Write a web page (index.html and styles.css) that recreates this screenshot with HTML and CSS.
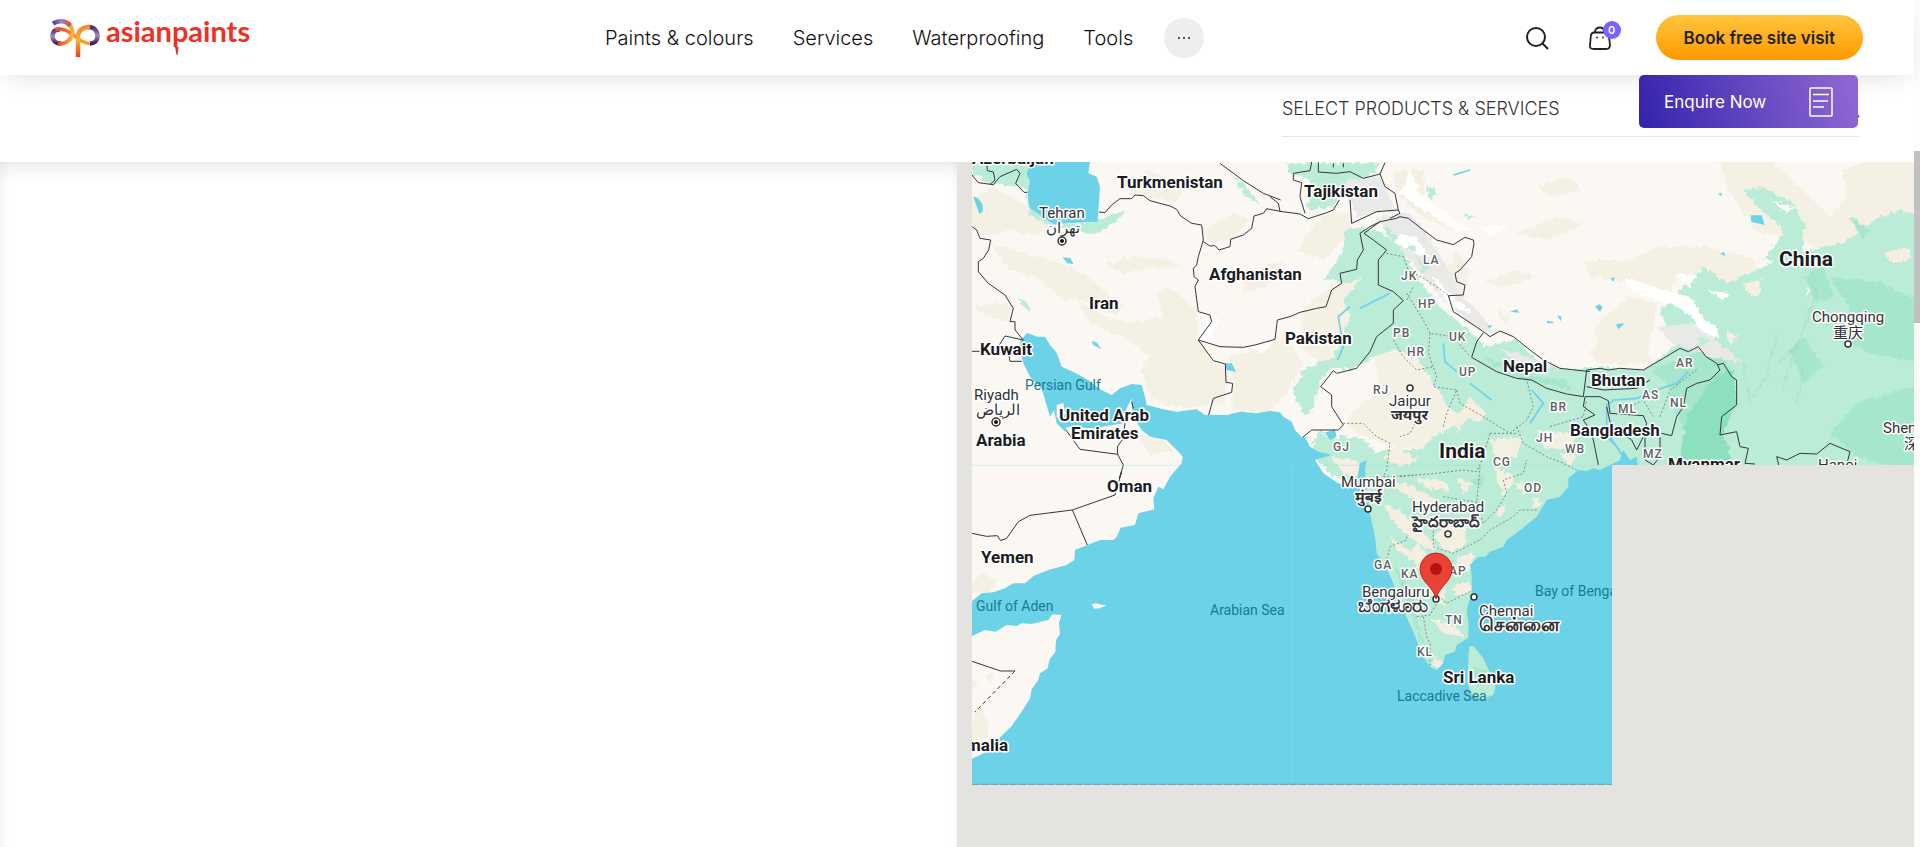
FILE: index.html
```html
<!DOCTYPE html>
<html lang="en">
<head>
<meta charset="utf-8">
<title>Asian Paints</title>
<link rel="stylesheet" href="styles.css">
</head>
<body>
<div class="page">
  <header class="header">
    <a class="logo" href="#" aria-label="asianpaints">
      <svg width="204" height="46" viewBox="49 14 204 46">
        <defs>
          <linearGradient id="lv" x1="0" y1="0" x2="0" y2="1"><stop offset="0" stop-color="#4b2a78"/><stop offset=".5" stop-color="#a386c6"/><stop offset="1" stop-color="#3f2160"/></linearGradient>
          <linearGradient id="lh" x1="0" y1="0" x2="1" y2="0"><stop offset="0" stop-color="#5a3a8c"/><stop offset=".5" stop-color="#9a80c4"/><stop offset="1" stop-color="#e8502c"/></linearGradient>
          <linearGradient id="lo" x1="0" y1="0" x2="0" y2="1"><stop offset="0" stop-color="#f58a2a"/><stop offset=".45" stop-color="#fbb034"/><stop offset="1" stop-color="#ee3a24"/></linearGradient>
          <linearGradient id="lr" x1="0" y1="0" x2="1" y2="0"><stop offset="0" stop-color="#ee4a28"/><stop offset="1" stop-color="#fbb034"/></linearGradient>
        </defs>
        <g fill="none" stroke-width="4.500">
          <path d="M61 42.500C55 42.500 52.500 39 52.500 35C52.500 31 55 28.500 60 28.500" stroke="url(#lv)"/>
          <path d="M55 28.500C64 26.500 69 31 74 34.500C79 39 84 43 91 42.500" stroke="url(#lr)" stroke-width="3.500"/>
          <path d="M58 42.500C66 44 72 38 72.500 32C72.500 28 71 25 68 22" stroke="url(#lr)" stroke-width="4"/>
          <path d="M53 22.500C59 19 66 19.500 70 24.500" stroke="url(#lh)"/>
          <path d="M88 26C94 26 97.500 30 97.500 35C97.500 40 94 42.500 90 42.500" stroke="url(#lv)"/>
          <path d="M78 56V36C78 29 83 26 90 26" stroke="url(#lo)"/>
        </g>
        <text class="logo-text" x="106" y="41">asianpaints</text>
        <path d="M175 46H178.500L177.500 54H176.500Z" fill="#ee3124"/>
      </svg>
    </a>
    <nav class="nav">
      <a href="#">Paints &amp; colours</a>
      <a href="#">Services</a>
      <a href="#">Waterproofing</a>
      <a href="#">Tools</a>
      <button class="more" aria-label="More"><svg width="14" height="4" viewBox="0 0 14 4"><g fill="#222"><circle cx="2" cy="2" r="1"/><circle cx="7" cy="2" r="1"/><circle cx="12" cy="2" r="1"/></g></svg></button>
    </nav>
    <div class="actions">
      <button class="icon" aria-label="Search"><svg width="24" height="24" viewBox="0 0 24 24" fill="none" stroke="#222" stroke-width="2"><circle cx="11" cy="11" r="9"/><path d="M17 17l6 6"/></svg></button>
      <button class="icon bag" aria-label="Cart"><svg width="24" height="24" viewBox="0 0 24 24" fill="none" stroke="#222" stroke-width="1.800" stroke-linecap="round"><path d="M6 6.500H17C20 6.500 20.500 8 21 11L22 19C22 22 21 23 18 23H6C3 23 1.500 22 2 19L2.800 10.500C3 7.500 4 6.500 6 6.500Z"/><path d="M7 6C7 3 9 1.500 12 1.500C14 1.500 16 3 16.500 6"/><path d="M9 11.500h.01M15 11.500h.01"/></svg><span class="badge">0</span></button>
      <button class="book">Book free site visit</button>
    </div>
  </header>
  <button class="enquire">Enquire Now
    <svg width="24" height="30" viewBox="0 0 24 30" fill="none" stroke="#fff" stroke-width="1.500"><rect x="1" y="1" width="22" height="28" rx="1"/><path d="M4 7.500h16M4 14h15M4 20h11" stroke-width="1.300"/></svg>
  </button>
  <div class="filter">
    <label class="field">
      <select class="select" aria-label="Products and services"><option>SELECT PRODUCTS &amp; SERVICES</option></select>
      <svg class="caret" width="12" height="8" viewBox="0 0 12 8" fill="none" stroke="#222" stroke-width="1.500"><path d="M1 6l5-5 5 5"/></svg>
    </label>
  </div>
  <main class="main">
    <section class="results"></section>
    <section class="map" aria-label="Map">
      <svg class="map-svg" viewBox="957 162 957 685" preserveAspectRatio="xMinYMin slice">
        <defs><clipPath id="tiles"><path d="M972 145H1932V465H1612V785H972Z"/></clipPath>
        <filter id="rough" x="0" y="0" width="1" height="1"><feTurbulence type="fractalNoise" baseFrequency=".07" numOctaves="3" seed="4"/><feDisplacementMap in="SourceGraphic" scale="22" xChannelSelector="R" yChannelSelector="G"/></filter></defs>
        <g clip-path="url(#tiles)">
          <rect x="972" y="145" width="960" height="640" fill="#fbf8f3"/>
          <g transform="translate(950 150) scale(.333333)">
            <path fill="#bbecd8" d="M1230 930L1300 900L1900 900L1986 960L1900 1080L1760 1120L1600 1240L1600 1480L1480 1600L1420 1560L1300 1300L1250 1100Z"/>
            <g filter="url(#rough)">
              <g fill="#f4f0e4">
                <path d="M60 150L130 110L230 165L300 230L260 255L180 240L100 260L60 210Z"/>
                <path d="M120 280L190 300L300 330L400 370L520 470L500 500L400 450L340 450L260 380L180 360Z"/>
                <path d="M380 450L470 500L540 520L640 500L620 430L660 410L740 480L745 560L790 640L840 660L820 760L700 775L610 750L570 660L600 620L520 560L420 520Z"/>
                <path d="M460 340L560 320L660 330L700 350L600 355L520 370Z"/><path d="M70 470L170 460L190 520L110 500Z"/>
                <path d="M510 100L600 60L700 120L680 160L560 130Z"/><path d="M760 240L850 190L900 210L850 270L780 280Z"/>
                <path d="M560 850L640 870L670 900L600 915Z"/><path d="M840 620L960 590L1010 560L1060 640L1000 740L960 790L850 780Z"/>
                <path d="M1060 470L1180 380L1280 330L1370 390L1310 470L1230 520L1200 620L1110 640L1050 590Z"/>
                <path d="M880 400L960 340L1000 340L950 410L880 430Z"/><path d="M1040 300L1120 190L1200 190L1190 260L1120 330Z"/>
                <path d="M1270 610L1400 600L1440 690L1500 720L1600 800L1480 880L1360 900L1250 860L1190 830L1200 790L1290 720Z"/>
                <path d="M1330 60L1420 60L1420 150L1500 240L1400 190L1340 130Z"/><path d="M1480 380L1520 300L1560 360L1540 440L1500 450Z"/>
                <path d="M1600 400L1700 360L1760 380L1680 410Z"/><path d="M1700 250L1820 200L1900 220L1800 270Z"/><path d="M1640 480L1680 500L1670 530Z"/>
                <path d="M1760 110L1860 80L1890 120L1800 140Z"/><path d="M1900 330L2040 330L2120 290L2260 290L2400 320L2430 370L2300 410L2180 370L2160 430L2070 410L2000 390L1920 380Z"/>
                <path d="M2310 36L2470 36L2560 120L2640 200L2690 140L2680 60L2740 36L2900 36L2900 200L2780 220L2700 270L2620 300L2540 260L2420 250L2330 110Z"/>
                <path d="M1940 520L2040 440L2120 460L2110 540L2080 620L2020 650L1940 600Z"/><path d="M1920 600L2090 570L2100 640L1940 640Z"/>
                <path d="M66 1300L100 1270L140 1290L120 1330L70 1325Z"/>
              </g>
              <g fill="#bbecd8">
                <path d="M60 36L250 36L240 120L200 110L120 100L66 70Z"/><path d="M225 120L250 180L330 225L400 220L470 200L530 180L500 215L430 255L380 240L290 220L240 195Z"/>
                <path d="M200 440L235 460L240 490Z"/><path d="M840 70L890 110L930 160L890 140Z"/>
                <path d="M1010 40L1290 40L1270 70L1190 100L1150 170L1070 180L1080 90L1020 70Z"/>
                <path d="M1190 230L1280 240L1350 290L1400 380L1470 470L1580 560L1650 650L1760 700L1900 740L2000 730L2000 900L2040 960L1890 970L1850 1020L1800 1050L1720 1120L1600 1220L1580 1300L1590 1450L1480 1570L1440 1560L1380 1400L1270 1200L1250 1000L1300 900L1400 900L1470 850L1530 820L1450 700L1400 620L1330 600L1270 620L1200 660L1150 650L1110 690L1090 780L1060 800L1030 720L1060 660L1150 620L1200 500L1180 450L1240 380L1200 400L1120 390L1170 320Z"/>
                <path d="M1110 840L1240 870L1330 960L1220 1020L1140 970L1080 900Z"/>
                <path d="M1600 590L1700 570L1770 640L1860 660L1920 650L2080 660L2200 570L2320 560L2400 640L2400 700L2920 600V980H1890V740L1760 700L1610 640Z"/>
                <path d="M2130 480L2260 350L2330 400L2480 330L2580 300L2680 280L2770 210L2850 180L2920 200V980H2300L2360 700L2180 600Z"/>
                <path d="M2380 120L2440 110L2530 160L2570 240L2500 230L2430 180Z"/><path d="M1430 110L1460 120L1440 160Z"/><path d="M1540 190L1580 200L1550 210Z"/>
                <path d="M2460 180L2560 240L2560 330L2440 330L2500 250Z"/>
              </g>
              <g fill="#a6e6cd">
                <path d="M2100 660L2290 590L2350 660L2280 700L2200 840L2150 700Z"/><path d="M2560 560L2620 650L2560 700L2520 600Z"/>
                <path d="M2640 380L2800 400L2920 460V640L2760 610L2650 560L2700 480Z"/><path d="M2720 760L2920 700V980L2720 920L2640 850Z"/>
                <path d="M1330 1250L1370 1340L1400 1440L1440 1540L1400 1400L1350 1260Z"/><path d="M1600 620L1760 680L1850 690L1860 720L1720 690L1620 640Z"/>
                <path d="M1560 1000L1600 970L1600 1010Z"/><path d="M2700 200L2760 240L2740 270Z"/><path d="M2560 380L2620 350L2650 440L2600 460Z"/>
              </g>
              <path fill="#8de0bd" d="M2180 980L2210 800L2290 680L2350 660L2360 760L2320 850L2360 980Z"/>
              <g fill="#f5efe2">
                <path d="M1310 1000L1370 1000L1420 1030L1480 1060L1440 1090L1360 1030Z"/><path d="M1300 1060L1360 1090L1420 1150L1470 1200L1420 1190L1340 1130Z"/>
                <path d="M1480 1130L1560 1110L1540 1190L1490 1210L1450 1160Z"/><path d="M1400 1180L1450 1240L1490 1300L1480 1370L1440 1330L1420 1290L1380 1210Z"/>
                <path d="M1520 1220L1570 1210L1560 1260L1520 1270Z"/><path d="M1440 1400L1520 1430L1540 1460L1480 1450Z"/><path d="M1630 950L1700 980L1660 1040L1640 990Z"/><path d="M1750 1040L1780 1060L1750 1080Z"/>
                <path d="M1500 780L1560 800L1520 850Z"/><path d="M1620 870L1720 860L1700 920L1640 930Z"/><path d="M1760 840L1880 850L1860 900L1780 890Z"/><path d="M1140 920L1220 930L1240 980L1180 970Z"/>
                <path d="M2380 400L2430 390L2430 440L2390 430Z"/><path d="M2330 540L2360 560L2340 590Z"/><path d="M2800 310L2880 290V330L2830 340Z"/>
                <path d="M1300 920L1340 890L1400 930L1350 950Z"/><path d="M1400 985L1480 990L1500 1020L1430 1015Z"/><path d="M1520 980L1570 1000L1540 1030Z"/><path d="M1320 1160L1380 1200L1400 1240L1340 1200Z"/><path d="M1640 1080L1670 1060L1650 1110Z"/><path d="M1550 1290L1570 1310L1540 1340L1500 1320Z"/><path d="M1690 1000L1740 1000L1720 1030Z"/><path d="M1580 900L1610 890L1600 930Z"/><path d="M1560 740L1610 790L1580 820L1530 790Z"/><path d="M1830 910L1880 920L1860 950Z"/><path d="M1450 1520L1480 1540L1470 1560L1450 1550Z"/>
              </g>
              <g fill="#e9e9e7">
                <path d="M1280 200L1380 190L1450 280L1500 360L1520 420L1600 500L1640 560L1560 520L1480 450L1420 380L1340 280Z"/><path d="M1180 90L1290 80L1340 180L1220 200Z"/>
                <path d="M2120 530L2240 520L2330 600L2380 640L2280 620L2170 580Z"/><path d="M1640 590L1780 640L1860 660L1700 640Z"/>
              </g>
              <g fill="#fff">
                <path d="M1380 60L1410 130L1500 200L1560 240L1520 240L1420 180L1350 130Z"/><path d="M1290 240L1400 260L1440 330L1340 280Z"/><path d="M1440 370L1500 430L1570 490L1500 470Z"/><path d="M1590 230L1680 230L1620 260Z"/>
                <path d="M2020 380L2140 420L2220 440L2280 530L2180 470L2040 420Z"/><path d="M2180 370L2240 380L2220 410Z"/><path d="M2270 420L2340 430L2320 450Z"/><path d="M2210 480L2300 530L2310 570L2250 540Z"/>
                <path d="M780 480L805 510L770 590L750 560Z"/><path d="M900 590L960 585L940 610Z"/><path d="M1110 850L1160 840L1170 870Z"/><path d="M2460 150L2530 170L2510 190Z"/><path d="M2570 410L2580 430L2570 440Z"/>
              </g>
              <path fill="#bbecd8" d="M1300 230L1350 260L1330 280ZM1400 320L1440 350L1420 370ZM1380 280L1400 300L1370 300ZM1240 120L1270 140L1230 140ZM2150 500L2200 490L2180 520ZM2240 560L2280 570L2250 590Z"/>
              <path fill="none" stroke="#9ccfbc" stroke-width="5" opacity=".35" d="M2580 360L2600 430L2560 540L2520 640L2500 720M2480 560L2450 680L2410 740M2380 640L2400 760M2540 590L2480 640M2560 650L2540 760"/>
            </g>
            <g fill="#6bd2e8">
              <path d="M212 570L232 548L262 560L285 560L300 585L320 608L335 650L375 668L415 690L450 718L485 735L510 715L545 702L575 705L585 740L590 765L640 778L680 785L740 778L765 795L830 795L870 785L920 790L960 783L990 787L1000 800L1025 815L1035 840L1055 862L1065 862L1080 890L1105 905L1145 915L1095 930L1120 970L1165 1000L1200 1005L1222 985L1230 940L1250 930L1245 960L1250 1030L1260 1090L1275 1160L1280 1210L1305 1245L1330 1300L1360 1380L1390 1445L1415 1510L1440 1550L1460 1560L1480 1540L1485 1515L1515 1505L1520 1485L1555 1463L1555 1420L1550 1380L1565 1330L1565 1275L1560 1245L1585 1220L1605 1220L1620 1205L1660 1190L1670 1170L1705 1145L1760 1100L1790 1050L1830 1040L1855 1010L1855 985L1885 960L1910 963L1930 955L1950 960L1986 942L2010 930L2020 900L2040 930L2060 920L2065 960H1986V1905H66V1353L95 1330L130 1327L165 1315L190 1300L225 1300L250 1278L295 1260L350 1245L373 1230L375 1200L412 1185L450 1170L490 1170L500 1160L512 1133L555 1125L565 1090L613 1078L610 1045L625 1010L640 1018L660 980L695 940L698 920L685 905L650 870L600 860L575 840L560 815L548 800L545 745L530 775L520 820L430 835L350 830L345 845L320 820L312 780L300 800L285 750L275 715L240 680L220 640L210 600Z"/>
              <path d="M245 36H420L415 70L440 80L450 110L443 215L380 218L310 222L270 195L240 175L232 130L240 95L230 70Z"/>
              <path d="M1125 848L1155 838L1160 860L1140 870ZM70 140L85 145L98 165V185L88 192ZM338 322L362 325L370 342L352 340ZM425 572L440 578L455 598L430 585ZM825 640L845 640L858 665L830 660ZM2402 196L2435 196L2444 225L2404 215ZM1935 470L1948 463L1958 472L1950 485ZM1998 522L2024 520L2005 538ZM1680 485L1708 488L1700 478ZM1790 512L1812 516L1808 520L1792 520ZM1611 525L1628 527L1618 535ZM2305 130L2318 130L2312 138ZM2310 312L2322 306L2325 318ZM1982 385L1995 382L1990 396ZM1822 496L1835 500L1832 514Z"/>
            </g>
            <g fill="none" stroke="#6bd2e8" stroke-width="5">
              <path d="M1163 630L1180 590L1165 500L1200 470M1230 475L1320 430M1480 580L1485 635L1520 665M1560 700L1625 750M1745 720L1780 760L1740 820M1980 760L1990 750L2060 745L2120 720L2180 700L2215 665M1970 760V860L2010 900M1510 75L1560 60M1980 860L2020 920" />
            </g>
            <g fill="#fbf8f3"><path d="M66 1458L105 1440L137 1445L170 1425L200 1428L215 1420L245 1422L295 1410L307 1393L334 1395L327 1420L330 1452L318 1470L316 1505L298 1530L293 1555L270 1570L265 1590L245 1618L240 1645L215 1685L185 1728L147 1765L110 1805L66 1826Z"/><path d="M425 1362L440 1360L455 1364L470 1366L450 1375L432 1376Z"/><path d="M320 765L340 758L345 790L335 820L320 800Z"/></g>
            <g fill="#f4f0e4"><path d="M80 1665L112 1710L115 1760L66 1790V1730ZM105 1580L125 1565L130 1585L118 1600ZM66 1590L84 1600L70 1622Z"/></g>
            <path fill="#bbecd8" d="M1558 1488L1572 1490L1600 1525L1625 1580L1637 1610L1630 1635L1595 1648L1565 1635L1552 1600L1555 1530Z"/>
            <path fill="#a6e6cd" d="M1570 1550L1610 1560L1620 1600L1580 1610Z"/>
            <g class="border">
              <path d="M66 75L85 98L130 104L150 80L200 58L210 70L197 100L222 127L232 127M110 36L112 62L130 66L135 90L120 104"/>
              <path d="M447 186L465 188L485 165L510 146L545 146L555 135L580 137L600 152L660 168L680 178L692 198L725 220L755 225L760 270L745 320L740 345L730 355L732 380L745 390L735 410L745 485L780 495L785 515L745 570L790 632L826 642L828 697L848 700L845 727L790 745L776 795"/>
              <path d="M810 40L880 92L940 130L992 150M760 275L780 288L795 287L807 300L840 290L842 268L880 255L905 235L912 198L940 190L950 176L990 184L1050 192L1075 206L1130 188L1150 180L1168 150"/>
              <path d="M745 570L810 590L880 592L915 585L975 568L982 510L1020 500L1050 487L1100 475L1128 470L1145 420L1175 400L1170 370L1220 358L1222 330L1240 300L1230 250L1260 230L1290 215L1340 205L1350 200L1375 205L1420 240L1460 270L1510 284L1545 262L1570 270L1572 280L1565 320L1530 360L1515 370L1520 395L1545 405L1540 435L1495 437L1510 485L1560 518L1600 545L1620 560L1650 543L1690 560L1740 600L1780 630L1830 655L1920 665"/>
              <path d="M1085 36L1080 62L1030 70L1030 90L1055 98L1050 140L1065 190M1105 36V66L1160 70L1200 65L1240 85L1290 72L1305 38M1290 72L1305 110L1335 130L1345 180L1350 190L1320 205M1200 150L1205 220L1280 185L1345 180M960 140L985 160L990 184M1150 40V52M1180 40V52"/>
              <path d="M1290 215L1242 250L1270 270L1310 300L1285 330L1285 405L1330 425L1360 452L1330 480L1330 520L1280 560L1260 605L1220 655L1160 670L1150 662L1112 710L1145 735L1145 770L1180 825L1165 840L1085 840L1058 862"/>
              <path d="M1600 548L1580 575L1565 622L1640 665L1700 685L1745 690L1790 715L1850 732L1900 740L1910 660M1910 660L1950 655L1975 660L2010 655L2080 660L2140 625L2190 595L2215 605L2245 590L2268 620L2300 640L2310 660L2280 690L2240 700L2210 715L2200 770L2180 800L2165 857L2135 850"/>
              <path d="M1910 710L1960 720L2060 715L2100 690M1905 740L1950 740L1975 752L1980 790L2080 797L2090 820L2080 860L2060 900L2045 870L2010 845L1990 860L1970 770M1905 740L1900 770L1935 795L1900 810L1920 840L1930 870L1945 945M2085 850V930L2110 945L2130 920V860"/>
              <path d="M2302 645L2320 640L2345 680L2360 690L2360 765L2315 800L2310 855L2360 845L2370 890L2395 895L2385 940L2415 942M2490 960L2480 920L2510 930L2550 910L2600 912L2640 880L2700 905L2690 945"/>
              <path d="M66 230L80 240L90 265L122 270L116 300L100 325L85 335V365L115 400L165 435L190 475L180 515L195 515V540L220 570M220 570L165 558L148 585L175 610L180 634H215M66 604H90"/>
              <path d="M348 840L390 898L503 913L502 890L520 865L525 820M545 755L550 775M503 913L520 945L508 985L515 965L495 1035L367 1080L412 1185M367 1080L240 1096L205 1115L170 1165L152 1172L142 1157L110 1159L66 1150M66 1534L152 1563H195"/>
              <path stroke-dasharray="12 9" d="M195 1563L75 1686"/>
            </g>
            <g class="state-line">
              <path d="M1310 310L1360 320L1375 360L1430 390L1480 425L1500 440M1370 430L1420 510L1440 550L1510 560L1560 620M1440 550L1435 610L1460 680L1450 710L1520 720L1490 790L1480 830M1370 450L1390 410M1330 570L1360 620L1400 660L1450 650M1180 820L1240 820L1280 860L1320 880L1310 960L1300 980L1400 975L1460 970L1540 960L1580 965L1600 920L1620 850"/>
              <path d="M1520 720L1530 760L1600 800L1680 850L1730 810L1750 770L1730 690M1700 830L1720 880L1790 920L1840 940L1880 960M1800 830L1900 800L1910 750M1350 980L1400 975M1400 810L1380 850L1350 860M1620 850L1700 850M1590 950L1580 1060L1600 1120L1640 1080L1670 1030L1660 990L1720 970L1730 930"/>
              <path d="M1450 1130V1190L1510 1210L1590 1170L1620 1140L1690 1100L1710 1080L1760 1080M1370 1160V1170L1320 1190L1310 1230M1455 1330L1490 1360L1560 1325M1400 1400L1440 1395L1460 1360M1420 1400L1430 1460L1440 1480V1550M1480 1040L1600 1060M2020 780L2080 750L2110 800M2130 800L2160 720L2240 660"/>
            </g>
            <path fill="none" stroke="#9bdbe6" stroke-width="2" opacity=".6" d="M1026 946V1905M66 946H1986"/>
            <path fill="none" stroke="#7d9fae" stroke-width="4" stroke-dasharray="22 6" d="M66 1903H1986"/>
          </g>
          <g class="country">
            <text x="972" y="164">Azerbaijan</text><text x="1117" y="188">Turkmenistan</text><text x="1304" y="197">Tajikistan</text><text x="1209" y="280">Afghanistan</text><text x="1089" y="309">Iran</text><text x="980" y="355">Kuwait</text><text x="1285" y="344">Pakistan</text>
            <text x="1059" y="421">United Arab</text><text x="1071" y="439">Emirates</text><text x="976" y="446">Arabia</text><text x="1107" y="492">Oman</text><text x="981" y="563">Yemen</text><text x="946" y="751">Somalia</text>
            <text x="1503" y="372">Nepal</text><text x="1591" y="386">Bhutan</text><text x="1570" y="436">Bangladesh</text><text x="1668" y="470">Myanmar</text><text x="1443" y="683">Sri Lanka</text>
          </g>
          <g class="country big"><text x="1439" y="458">India</text><text x="1779" y="266">China</text></g>
          <g class="city">
            <text x="1039" y="218">Tehran</text><text x="1046" y="233">تهران</text><text x="974" y="400">Riyadh</text><text x="976" y="415">الرياض</text>
            <text x="1389" y="406">Jaipur</text><text class="native" x="1391" y="420">जयपुर</text><text x="1341" y="487">Mumbai</text><text class="native" x="1355" y="502">मुंबई</text>
            <text x="1412" y="512">Hyderabad</text><text class="native" x="1412" y="527">హైదరాబాద్</text><text x="1362" y="597">Bengaluru</text><text class="native wide" x="1358" y="612">ಬೆಂಗಳೂರು</text>
            <text x="1479" y="616">Chennai</text><text class="native wide" x="1479" y="631">சென்னை</text><text x="1812" y="322">Chongqing</text><text x="1833" y="338">重庆</text><text x="1883" y="433">Shenzhen</text><text x="1904" y="449">深圳</text><text x="1818" y="470">Hanoi</text>
          </g>
          <g class="state">
            <text x="1423" y="264">LA</text><text x="1401" y="280">JK</text><text x="1418" y="308">HP</text><text x="1393" y="337">PB</text><text x="1449" y="341">UK</text><text x="1407" y="356">HR</text><text x="1459" y="376">UP</text><text x="1373" y="394">RJ</text><text x="1550" y="411">BR</text><text x="1333" y="451">GJ</text><text x="1536" y="442">JH</text><text x="1565" y="453">WB</text><text x="1493" y="466">CG</text>
            <text x="1524" y="492">OD</text><text x="1374" y="569">GA</text><text x="1401" y="578">KA</text><text x="1449" y="575">AP</text><text x="1445" y="624">TN</text><text x="1417" y="656">KL</text><text x="1676" y="367">AR</text><text x="1642" y="399">AS</text><text x="1670" y="407">NL</text><text x="1618" y="413">ML</text><text x="1643" y="458">MZ</text>
          </g>
          <g class="water"><text x="1025" y="390">Persian Gulf</text><text x="976" y="611">Gulf of Aden</text><text x="1210" y="615">Arabian Sea</text><text x="1535" y="596">Bay of Bengal</text><text x="1397" y="701">Laccadive Sea</text></g>
          <g fill="#fff" stroke="#333" stroke-width="1.500"><circle cx="1410" cy="388" r="3"/><circle cx="1368" cy="509" r="3"/><circle cx="1448" cy="534" r="3"/><circle cx="1436" cy="599" r="3"/><circle cx="1474" cy="597" r="3"/><circle cx="1848" cy="344" r="3"/><circle cx="1062" cy="241" r="4"/><circle cx="996" cy="422" r="4"/></g>
          <g fill="#111"><circle cx="1062" cy="241" r="2"/><circle cx="996" cy="422" r="2"/></g>
          <path d="M1436 599C1434 587 1420 582 1420 569A16 16 0 0 1 1452 569C1452 582 1438 587 1436 599Z" fill="#ea4335" stroke="#c5221f"/>
          <circle cx="1436" cy="569" r="6" fill="#b31412"/>
        </g>
      </svg>
    </section>
  </main>
</div>
<div class="scroll"><div class="thumb"></div></div>
</body>
</html>
```
FILE: styles.css
```css
* { box-sizing: border-box; }
body { margin: 0; height: 100vh; display: flex; overflow: hidden; background: #fff; font-family: Inter, "Noto Sans", sans-serif; color: #111; }
button { border: 0; padding: 0; background: none; font: inherit; color: inherit; cursor: pointer; }
.page { flex: 1; min-width: 0; position: relative; display: flex; flex-direction: column; }
.header { position: relative; z-index: 2; height: 75px; flex: none; display: flex; align-items: center; padding: 0 51px 0 49px; background: #fff; box-shadow: 0 8px 24px -6px rgba(0,0,0,.12); }
.logo, .logo svg { display: block; }
.logo-text { font: 700 29px Lato, sans-serif; fill: #ee3124; }
.nav { display: flex; align-items: center; gap: 39px; margin-left: 352px; font-size: 20px; font-weight: 350; line-height: 28px; }
.nav a { color: #111; text-decoration: none; white-space: nowrap; }
.more { width: 40px; height: 40px; margin-left: -8px; border-radius: 50%; background: #eee; display: grid; place-items: center; }
.actions { margin-left: auto; display: flex; align-items: center; }
.icon { position: relative; width: 24px; height: 24px; margin-right: 39px; }
.icon svg { display: block; }
.badge { position: absolute; left: 15px; top: -5px; width: 18px; height: 18px; border-radius: 50%; background: #7b61ff; color: #fff; font: 600 11px/18px Inter, sans-serif; text-align: center; }
.bag { margin-right: 44px; }
.book { height: 45px; padding: 0 28px; border-radius: 23px; background: linear-gradient(#ffc53d, #ff9800); font-size: 17px; font-weight: 600; color: #222; white-space: nowrap; }
.enquire { position: absolute; z-index: 3; top: 75px; right: 56px; width: 219px; height: 53px; padding: 0 25px; border-radius: 5px; background: linear-gradient(75deg, #3423ab, #9169d5); color: #fff; font-size: 17px; display: flex; align-items: center; justify-content: space-between; }
.filter { flex: none; height: 87px; padding: 15px 54px 0 0; display: flex; justify-content: flex-end; background: #fff; }
.field { position: relative; width: 578px; height: 47px; border-bottom: 1px solid #e6e6e6; }
.select { appearance: none; width: 100%; height: 38px; padding: 0; border: 0; background: none; font: 350 18px/38px Inter, sans-serif; color: #333; }
.caret { position: absolute; right: 0; top: 21px; }
.main { flex: 1; min-height: 0; display: flex; }
.results { flex: 1; box-shadow: inset 0 16px 20px -14px rgba(0,0,0,.13), inset 12px 0 14px -10px rgba(0,0,0,.05), inset -8px 0 10px -8px rgba(0,0,0,.06); }
.map { flex: 1; min-width: 0; background: #e4e3df; overflow: hidden; }
.map-svg { display: block; width: 100%; height: 100%; font-family: Roboto, "Noto Sans", "Noto Sans CJK SC", sans-serif; }
.map-svg text { paint-order: stroke; stroke: #fff; stroke-width: 3px; stroke-linejoin: round; }
.country { font-size: 17px; font-weight: 700; fill: #1b1c1f; }
.big { font-size: 21px; }
.city { font-size: 15px; fill: #303236; }
.native { font-weight: 700; }
.wide { font-size: 19px; }
.state { font-size: 12px; font-weight: 500; letter-spacing: 1px; fill: #5c5f66; }
.water { font-size: 14px; fill: #177c92; }
.map-svg .water text { stroke: none; }
.border { fill: none; stroke: #33363b; stroke-width: 3px; stroke-linejoin: round; }
.state-line { fill: none; stroke: #7a8a86; stroke-width: 3px; stroke-dasharray: 6 6; }
.scroll { width: 6px; flex: none; padding-top: 151px; background: #fffdfa; }
.thumb { height: 172px; background: #c1c1c1; }
```
